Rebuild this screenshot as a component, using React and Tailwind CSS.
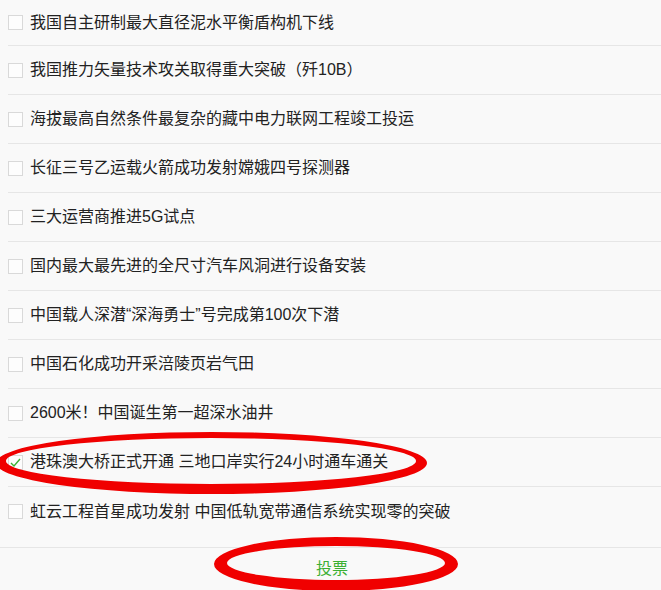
import React from "react";

const items = [
  "我国自主研制最大直径泥水平衡盾构机下线",
  "我国推力矢量技术攻关取得重大突破（歼10B）",
  "海拔最高自然条件最复杂的藏中电力联网工程竣工投运",
  "长征三号乙运载火箭成功发射嫦娥四号探测器",
  "三大运营商推进5G试点",
  "国内最大最先进的全尺寸汽车风洞进行设备安装",
  "中国载人深潜“深海勇士”号完成第100次下潜",
  "中国石化成功开采涪陵页岩气田",
  "2600米！中国诞生第一超深水油井",
  "港珠澳大桥正式开通 三地口岸实行24小时通车通关",
  "虹云工程首星成功发射 中国低轨宽带通信系统实现零的突破",
];

function Check() {
  return (
    <svg width="13" height="13" viewBox="0 0 13 13" className="block">
      <path d="M2 7 L5 10 L11 3" fill="none" stroke="#3cb034" strokeWidth="1.4" />
    </svg>
  );
}

export default function App() {
  return (
    <div
      className="relative w-[661px] h-[590px] overflow-hidden bg-[#f9f9f9] text-[#222]"
      style={{ fontFamily: '"Liberation Sans", "Noto Sans CJK SC", sans-serif' }}
    >
      <div className="flex flex-col">
        {items.map((t, i) => (
          <div
            key={i}
            className={
              "ml-2 flex items-center " +
              (i === 0 ? "h-[46px] " : "h-[49px] ") +
              (i < items.length - 1 ? "border-b border-[#e6e6e6]" : "")
            }
          >
            <div className="w-[15px] h-[15px] border border-[#d9d9d9] bg-[#fdfdfd] mr-[7px] flex items-center justify-center shrink-0">
              {i === 9 && <Check />}
            </div>
            <span className="text-[16px] leading-none whitespace-nowrap">{t}</span>
          </div>
        ))}
      </div>
      <div className="mt-[11px] border-t border-[#e6e6e6] h-[43px] flex items-center justify-center">
        <span className="text-[16px] text-[#3cb034] pl-[3px]">投票</span>
      </div>
      <svg
        className="absolute inset-0 pointer-events-none"
        width="661"
        height="590"
        viewBox="0 0 661 590"
      >
        <path
          fillRule="evenodd"
          fill="#f00000"
          d="M -4 463 A 215.5 31 0 1 0 427 463 A 215.5 31 0 1 0 -4 463 Z M 6 461 A 205 23 0 1 1 416 461 A 205 23 0 1 1 6 461 Z"
        />
        <path
          fillRule="evenodd"
          fill="#f00000"
          d="M 214 564 A 122 27 0 1 0 458 564 A 122 27 0 1 0 214 564 Z M 227 563 A 109 17 0 1 1 445 563 A 109 17 0 1 1 227 563 Z"
        />
      </svg>
    </div>
  );
}
